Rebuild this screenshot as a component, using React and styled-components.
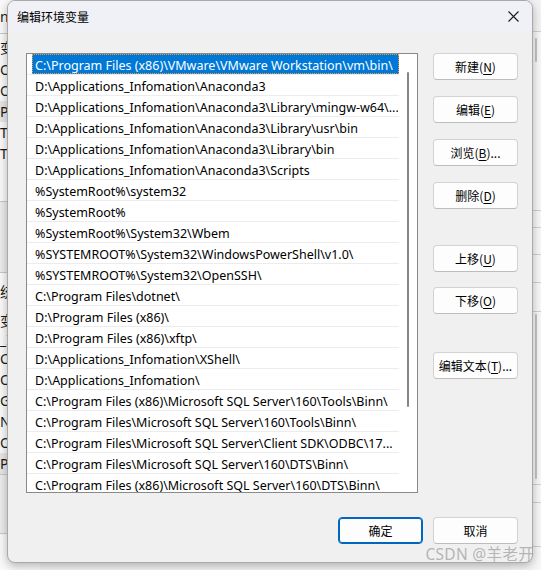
import React from "react";
import styled, { createGlobalStyle } from "styled-components";

const GlobalStyle = createGlobalStyle`
  html, body {
    margin: 0;
    padding: 0;
    background: #f3f3f3;
  }
  body {
    font-family: "Noto Sans", "Noto Sans CJK SC", sans-serif;
    font-size: 12px;
    color: #000;
  }
`;

const paths = [
  "C:\\Program Files (x86)\\VMware\\VMware Workstation\\vm\\bin\\",
  "D:\\Applications_Infomation\\Anaconda3",
  "D:\\Applications_Infomation\\Anaconda3\\Library\\mingw-w64\\...",
  "D:\\Applications_Infomation\\Anaconda3\\Library\\usr\\bin",
  "D:\\Applications_Infomation\\Anaconda3\\Library\\bin",
  "D:\\Applications_Infomation\\Anaconda3\\Scripts",
  "%SystemRoot%\\system32",
  "%SystemRoot%",
  "%SystemRoot%\\System32\\Wbem",
  "%SYSTEMROOT%\\System32\\WindowsPowerShell\\v1.0\\",
  "%SYSTEMROOT%\\System32\\OpenSSH\\",
  "C:\\Program Files\\dotnet\\",
  "D:\\Program Files (x86)\\",
  "D:\\Program Files (x86)\\xftp\\",
  "D:\\Applications_Infomation\\XShell\\",
  "D:\\Applications_Infomation\\",
  "C:\\Program Files (x86)\\Microsoft SQL Server\\160\\Tools\\Binn\\",
  "C:\\Program Files\\Microsoft SQL Server\\160\\Tools\\Binn\\",
  "C:\\Program Files\\Microsoft SQL Server\\Client SDK\\ODBC\\17...",
  "C:\\Program Files\\Microsoft SQL Server\\160\\DTS\\Binn\\",
  "C:\\Program Files (x86)\\Microsoft SQL Server\\160\\DTS\\Binn\\",
];

// background window peeking out on both sides
const backLeft = [
  { h: 34, text: "ng", top: true },
  { h: 25, text: "变" },
  { h: 21, text: "Or" },
  { h: 21, text: "Or" },
  { h: 21, text: "Pa", sel: true },
  { h: 21, text: "TE" },
  { h: 21, text: "TM" },
  { h: 37, text: "" },
  { h: 72, text: "", band: true },
  { h: 36, text: "统" },
  { h: 21, text: "变" },
  { h: 18, text: "_I" },
  { h: 21, text: "Co" },
  { h: 21, text: "Or" },
  { h: 21, text: "G" },
  { h: 21, text: "NI" },
  { h: 21, text: "OS" },
  { h: 21, text: "Pa", sel: true },
  { h: 60, text: "", band: true },
];

const Desktop = styled.div`
  position: relative;
  width: 541px;
  height: 570px;
  overflow: hidden;
  background: #f3f3f3;
`;

const BackWindow = styled.div`
  display: flex;
  justify-content: space-between;
  height: 100%;
`;

const BackLeft = styled.div`
  display: flex;
  flex-direction: column;
  width: 40px;
  background: #f9f9f9;
`;

const BackRow = styled.div`
  height: ${(p) => p.$h}px;
  flex: none;
  display: flex;
  align-items: center;
  padding-left: 0;
  font-size: 14px;
  color: #1a1a1a;
  white-space: nowrap;
  background: ${(p) => (p.$sel ? "#e6e6e6" : p.$band ? "#ebebeb" : "transparent")};
  border-bottom: ${(p) => (p.$top || p.$band ? "1px solid #c8c8c8" : "none")};
  border-top: ${(p) => (p.$band ? "1px solid #c8c8c8" : "none")};
  box-sizing: border-box;
`;

const BackRight = styled.div`
  width: 30px;
  display: flex;
  flex-direction: column;
  background: #f7f7f7;
`;

const BackBar = styled.div`
  height: ${(p) => p.$h}px;
  flex: none;
  box-sizing: border-box;
  border-bottom: ${(p) => (p.$line ? "1px solid #cfcfcf" : "none")};
  background: ${(p) => p.$bg || "transparent"};
  display: flex;
  justify-content: flex-end;
  padding-right: 4px;
`;

const BackThumb = styled.div`
  width: 2px;
  height: ${(p) => p.$h}px;
  margin-top: ${(p) => p.$t}px;
  background: #c4c4c4;
  border-radius: 1px;
`;

const Dialog = styled.div`
  position: absolute;
  left: 7px;
  top: 0;
  width: 526px;
  height: 563px;
  box-sizing: border-box;
  border: 1px solid #a9a9a9;
  border-radius: 8px;
  background: #f0f0f0;
  box-shadow: 0 3px 10px rgba(0, 0, 0, 0.28);
  display: flex;
  flex-direction: column;
  overflow: hidden;
`;

const TitleBar = styled.div`
  height: 30px;
  flex: none;
  background: #eff1f6;
  display: flex;
  align-items: center;
  justify-content: space-between;
  padding: 0 6px 0 9px;
`;

const Title = styled.div`
  font-family: "Noto Sans CJK SC", sans-serif;
  font-size: 12px;
  color: #000;
`;

const CloseButton = styled.div`
  width: 26px;
  height: 26px;
  display: flex;
  align-items: center;
  justify-content: center;
`;

const Body = styled.div`
  flex: 1;
  display: flex;
  flex-direction: column;
  padding: 22px 14px 18px 18px;
`;

const Main = styled.div`
  display: flex;
  gap: 15px;
  align-items: flex-start;
`;

const ListBox = styled.div`
  width: 392px;
  height: 440px;
  box-sizing: border-box;
  border: 1px solid #8a8a8a;
  background: #fff;
  display: flex;
  overflow: hidden;
`;

const Rows = styled.div`
  width: 372px;
  flex: none;
`;

const Row = styled.div`
  height: 21px;
  box-sizing: border-box;
  border-bottom: 1px solid #ececec;
  padding-left: 5px;
  display: flex;
`;

const Cell = styled.div`
  flex: 1;
  min-width: 0;
  height: 20px;
  box-sizing: border-box;
  line-height: 19px;
  padding: 1px 0 0 2px;
  font-size: 12.5px;
  white-space: nowrap;
  overflow: hidden;
  color: ${(p) => (p.$selected ? "#fff" : "#000")};
  background: ${(p) => (p.$selected ? "#0078d7" : "transparent")};
  border: 1px ${(p) => (p.$selected ? "dotted #f39a3a" : "solid transparent")};
`;

const ScrollTrack = styled.div`
  flex: 1;
  display: flex;
  justify-content: center;
  padding-top: 18px;
`;

const Thumb = styled.div`
  width: 2px;
  height: 335px;
  border-radius: 1px;
  background: #858585;
`;

const Side = styled.div`
  width: 85px;
  display: flex;
  flex-direction: column;
`;

const Button = styled.div`
  width: 85px;
  height: 27px;
  box-sizing: border-box;
  margin-top: ${(p) => p.$mt || 0}px;
  border: 1px solid ${(p) => (p.$primary ? "#0067c0" : "#d2d2d2")};
  border-bottom-color: ${(p) => (p.$primary ? "#0067c0" : "#bdbdbd")};
  box-shadow: ${(p) => (p.$primary ? "inset 0 0 0 1px #0067c0" : "none")};
  border-radius: 4px;
  background: #fdfdfd;
  display: flex;
  align-items: center;
  justify-content: center;
  font-family: "Noto Sans CJK SC", sans-serif;
  font-size: 12px;
  color: #000;
  white-space: nowrap;
`;

const Key = styled.span`
  text-decoration: underline;
  text-underline-offset: 2px;
`;

const Footer = styled.div`
  margin-top: auto;
  display: flex;
  justify-content: flex-end;
  gap: 10px;
`;

const Watermark = styled.div`
  position: absolute;
  right: 7px;
  bottom: 5px;
  font-family: "Noto Sans", "Noto Sans CJK SC", sans-serif;
  font-size: 15.5px;
  color: rgba(160, 160, 160, 0.75);
  letter-spacing: 0.3px;
`;

function Label({ text, k, tail = "" }) {
  return (
    <>
      {text}(<Key>{k}</Key>){tail}
    </>
  );
}

export default function App() {
  return (
    <>
      <GlobalStyle />
      <Desktop>
        <BackWindow>
          <BackLeft>
            {backLeft.map((r, i) => (
              <BackRow key={i} $h={r.h} $sel={r.sel} $band={r.band} $top={r.top}>
                {r.text}
              </BackRow>
            ))}
          </BackLeft>
          <BackRight>
            <BackBar $h={32} $line $bg="#f3f3f3" />
            <BackBar $h={100}>
              <BackThumb $h={24} $t={6} />
            </BackBar>
            <BackBar $h={79} $line />
            <BackBar $h={17} $line />
            <BackBar $h={27} $line />
            <BackBar $h={28} $line />
            <BackBar $h={29} $line />
            <BackBar $h={173} $line>
              <BackThumb $h={165} $t={2} />
            </BackBar>
            <BackBar $h={18} $line />
            <BackBar $h={44} $line />
          </BackRight>
        </BackWindow>

        <Dialog>
          <TitleBar>
            <Title>编辑环境变量</Title>
            <CloseButton>
              <svg width="11" height="11" viewBox="0 0 11 11">
                <path d="M0.5 0.5 L10.5 10.5 M10.5 0.5 L0.5 10.5" stroke="#1b1b1b" strokeWidth="1.1" fill="none" />
              </svg>
            </CloseButton>
          </TitleBar>
          <Body>
            <Main>
              <ListBox>
                <Rows>
                  {paths.map((p, i) => (
                    <Row key={i}>
                      <Cell $selected={i === 0}>{p}</Cell>
                    </Row>
                  ))}
                </Rows>
                <ScrollTrack>
                  <Thumb />
                </ScrollTrack>
              </ListBox>
              <Side>
                <Button>
                  <Label text="新建" k="N" />
                </Button>
                <Button $mt={16}>
                  <Label text="编辑" k="E" />
                </Button>
                <Button $mt={16}>
                  <Label text="浏览" k="B" tail="..." />
                </Button>
                <Button $mt={16}>
                  <Label text="删除" k="D" />
                </Button>
                <Button $mt={36}>
                  <Label text="上移" k="U" />
                </Button>
                <Button $mt={15}>
                  <Label text="下移" k="O" />
                </Button>
                <Button $mt={38}>
                  <Label text="编辑文本" k="T" tail="..." />
                </Button>
              </Side>
            </Main>
            <Footer>
              <Button $primary>确定</Button>
              <Button>取消</Button>
            </Footer>
          </Body>
        </Dialog>
        <Watermark>CSDN @羊老开</Watermark>
      </Desktop>
    </>
  );
}
